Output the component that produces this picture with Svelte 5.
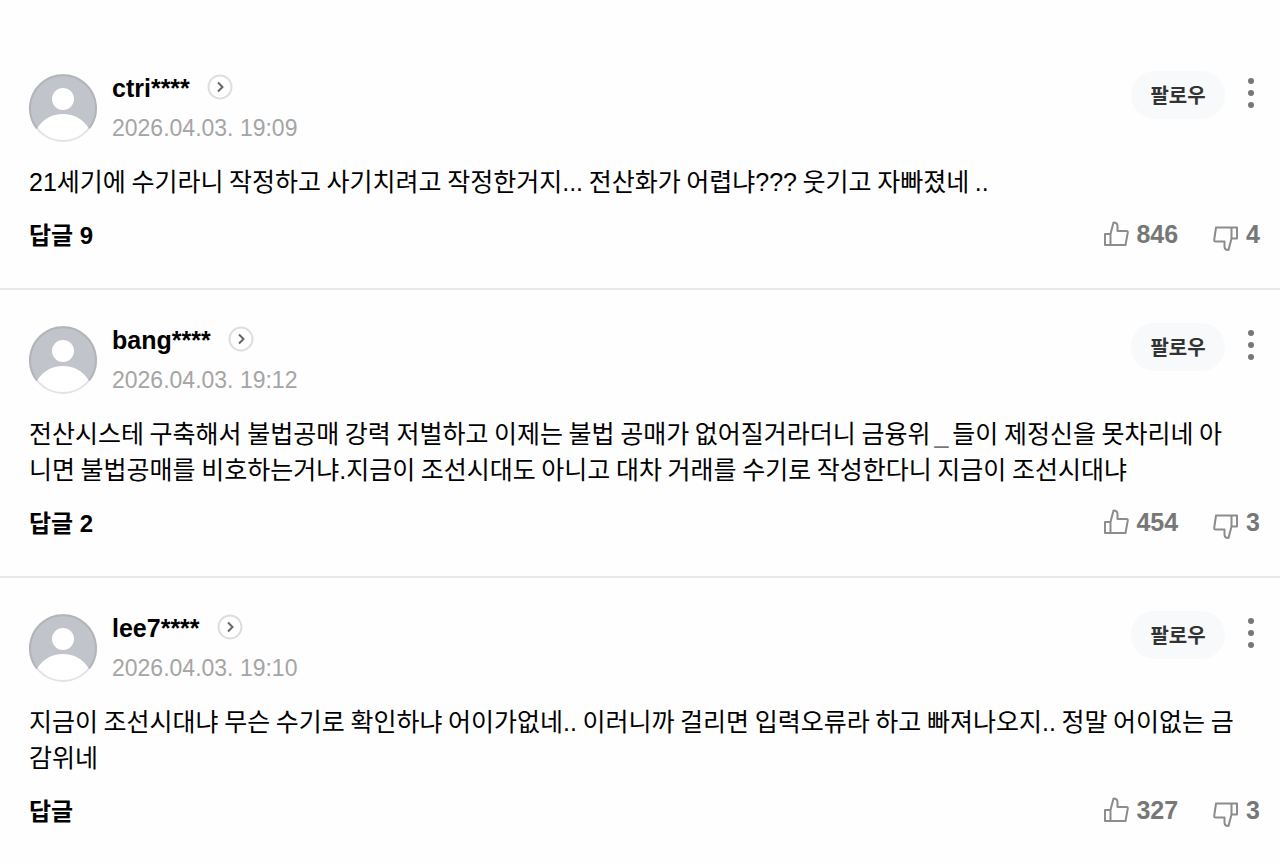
<script lang="ts">
	interface Comment {
		user: string;
		date: string;
		text: string;
		replies: number;
		likes: number;
		dislikes: number;
	}

	const comments: Comment[] = [
		{
			user: 'ctri****',
			date: '2026.04.03. 19:09',
			text: '21세기에 수기라니 작정하고 사기치려고 작정한거지... 전산화가 어렵냐??? 웃기고 자빠졌네 ..',
			replies: 9,
			likes: 846,
			dislikes: 4
		},
		{
			user: 'bang****',
			date: '2026.04.03. 19:12',
			text: '전산시스테 구축해서 불법공매 강력 저벌하고 이제는 불법 공매가 없어질거라더니 금융위_들이 제정신을 못차리네 아니면 불법공매를 비호하는거냐.지금이 조선시대도 아니고 대차 거래를 수기로 작성한다니 지금이 조선시대냐',
			replies: 2,
			likes: 454,
			dislikes: 3
		},
		{
			user: 'lee7****',
			date: '2026.04.03. 19:10',
			text: '지금이 조선시대냐 무슨 수기로 확인하냐 어이가없네.. 이러니까 걸리면 입력오류라 하고 빠져나오지.. 정말 어이없는 금감위네',
			replies: 0,
			likes: 327,
			dislikes: 3
		}
	];

	// digits and punctuation are set in the latin face
	function splitText(text: string): string[] {
		return text.split(/([\d?_.]+)/).filter((part) => part !== '');
	}

	function isLatin(part: string): boolean {
		return /^[\d?_.]/.test(part);
	}
</script>

<ul class="comments">
	{#each comments as comment}
		<li class="comment">
			<header class="head">
				<svg class="avatar" viewBox="0 0 68 68" aria-hidden="true">
					<circle cx="34" cy="34" r="33" fill="#fff" stroke="#e2e3e5" stroke-width="2" />
					<path d="M8 54.5A33 33 0 1 1 60 54.5C54 45 45 40 34 40S14 45 8 54.5Z" fill="#c1c4ca" />
					<path d="M8 54.5A33 33 0 1 1 60 54.5" fill="none" stroke="#b1b4b8" stroke-width="2" />
					<circle cx="34" cy="25" r="11" fill="#fff" />
				</svg>
				<div class="info">
					<a class="user" href="#profile">
						<span>{comment.user}</span>
						<svg class="arrow" viewBox="0 0 26 26" aria-hidden="true">
							<circle cx="13" cy="13" r="11.5" fill="#fff" stroke="#dedede" stroke-width="2" />
							<path d="M11 8.5l4.5 4.5-4.5 4.5" fill="none" stroke="#666" stroke-width="2" />
						</svg>
					</a>
					<time class="date">{comment.date}</time>
				</div>
				<button class="follow" type="button">팔로우</button>
				<button class="more" type="button" aria-label="더보기">
					<svg viewBox="0 0 8 32" aria-hidden="true">
						<circle cx="4" cy="4" r="3" />
						<circle cx="4" cy="16" r="3" />
						<circle cx="4" cy="28" r="3" />
					</svg>
				</button>
			</header>
			<p class="text">{#each splitText(comment.text) as part}{#if isLatin(part)}<span class="latin" class:blank={part === '_'}>{part}</span>{:else}{part}{/if}{/each}</p>
			<footer class="foot">
				<button class="reply" type="button">답글{#if comment.replies > 0}&nbsp;{comment.replies}{/if}</button>
				<div class="votes">
					<button class="vote" type="button" aria-label="좋아요 {comment.likes}">
						<svg viewBox="0 0 26 26" aria-hidden="true">
							<path d="M2 13H7.5V24H2ZM7.5 13L10.5 1.5C13 1.5 14.5 3 14.5 5V10H23.5Q25 10 24.8 11.5L22.5 24H7.5" />
						</svg>
						<span>{comment.likes}</span>
					</button>
					<button class="vote down" type="button" aria-label="싫어요 {comment.dislikes}">
						<svg viewBox="0 0 26 26" aria-hidden="true">
							<path d="M24 13.5H18.5V2.5H24ZM18.5 13.5L15.5 25C13 25 11.5 23.5 11.5 21.5V16.5H2.5Q1 16.5 1.2 15L3 2.5H18.5" />
						</svg>
						<span>{comment.dislikes}</span>
					</button>
				</div>
			</footer>
		</li>
	{/each}
</ul>

<style>
	:global(body) {
		margin: 0;
		background: #fefefe;
	}

	.comments {
		margin: 0;
		padding: 38px 0 0;
		list-style: none;
		font-family: 'Liberation Sans', 'Noto Sans CJK KR', sans-serif;
		color: #000;
	}

	.comment {
		padding: 36px 20px 34px 29px;
		border-bottom: 2px solid #e8e8e8;
	}

	.comment:last-child {
		padding-bottom: 16px;
		border-bottom: none;
	}

	button {
		margin: 0;
		padding: 0;
		border: none;
		background: none;
		font-family: inherit;
		color: inherit;
		cursor: pointer;
	}

	.head {
		display: flex;
		align-items: flex-start;
		height: 68px;
	}

	.avatar {
		width: 68px;
		height: 68px;
		margin-right: 15px;
	}

	.info {
		flex: 1;
	}

	.user {
		display: flex;
		align-items: flex-start;
		gap: 17px;
		font-size: 25px;
		line-height: 28px;
		font-weight: bold;
		color: #000;
		text-decoration: none;
	}

	.arrow {
		width: 26px;
		height: 26px;
	}

	.date {
		display: block;
		margin-top: 12px;
		font-size: 23px;
		line-height: 28px;
		color: #a5a5a5;
	}

	.follow {
		width: 94px;
		height: 48px;
		margin: -3px 22px 0 0;
		padding-bottom: 2px;
		border-radius: 24px;
		background: #f7f9fb;
		font-size: 20px;
		font-weight: bold;
		color: #333;
	}

	.more {
		width: 8px;
		height: 32px;
		margin: 3px 5px 0 0;
	}

	.more svg {
		display: block;
		fill: #777;
	}

	.text {
		margin: 20px 22px 0 0;
		font-family: 'Noto Sans CJK KR', sans-serif;
		font-size: 25px;
		line-height: 36px;
		word-break: break-all;
	}

	.latin {
		font-family: 'Liberation Sans', sans-serif;
		line-height: 28px;
	}

	.blank {
		margin: 0 4px;
		color: #777;
	}

	.foot {
		display: flex;
		justify-content: space-between;
		align-items: flex-start;
		height: 36px;
		margin-top: 20px;
	}

	.reply {
		font-size: 24px;
		line-height: 36px;
		font-weight: bold;
	}

	.votes {
		display: flex;
		gap: 35px;
		margin-top: -2px;
	}

	.vote {
		display: flex;
		align-items: center;
		gap: 7px;
		font-size: 25px;
		line-height: 36px;
		font-weight: bold;
		color: #777;
	}

	.vote svg {
		width: 26px;
		height: 26px;
		fill: none;
		stroke: #8c8c8c;
		stroke-width: 2;
		stroke-linejoin: round;
	}

	.down svg {
		margin-top: 8px;
	}
</style>
